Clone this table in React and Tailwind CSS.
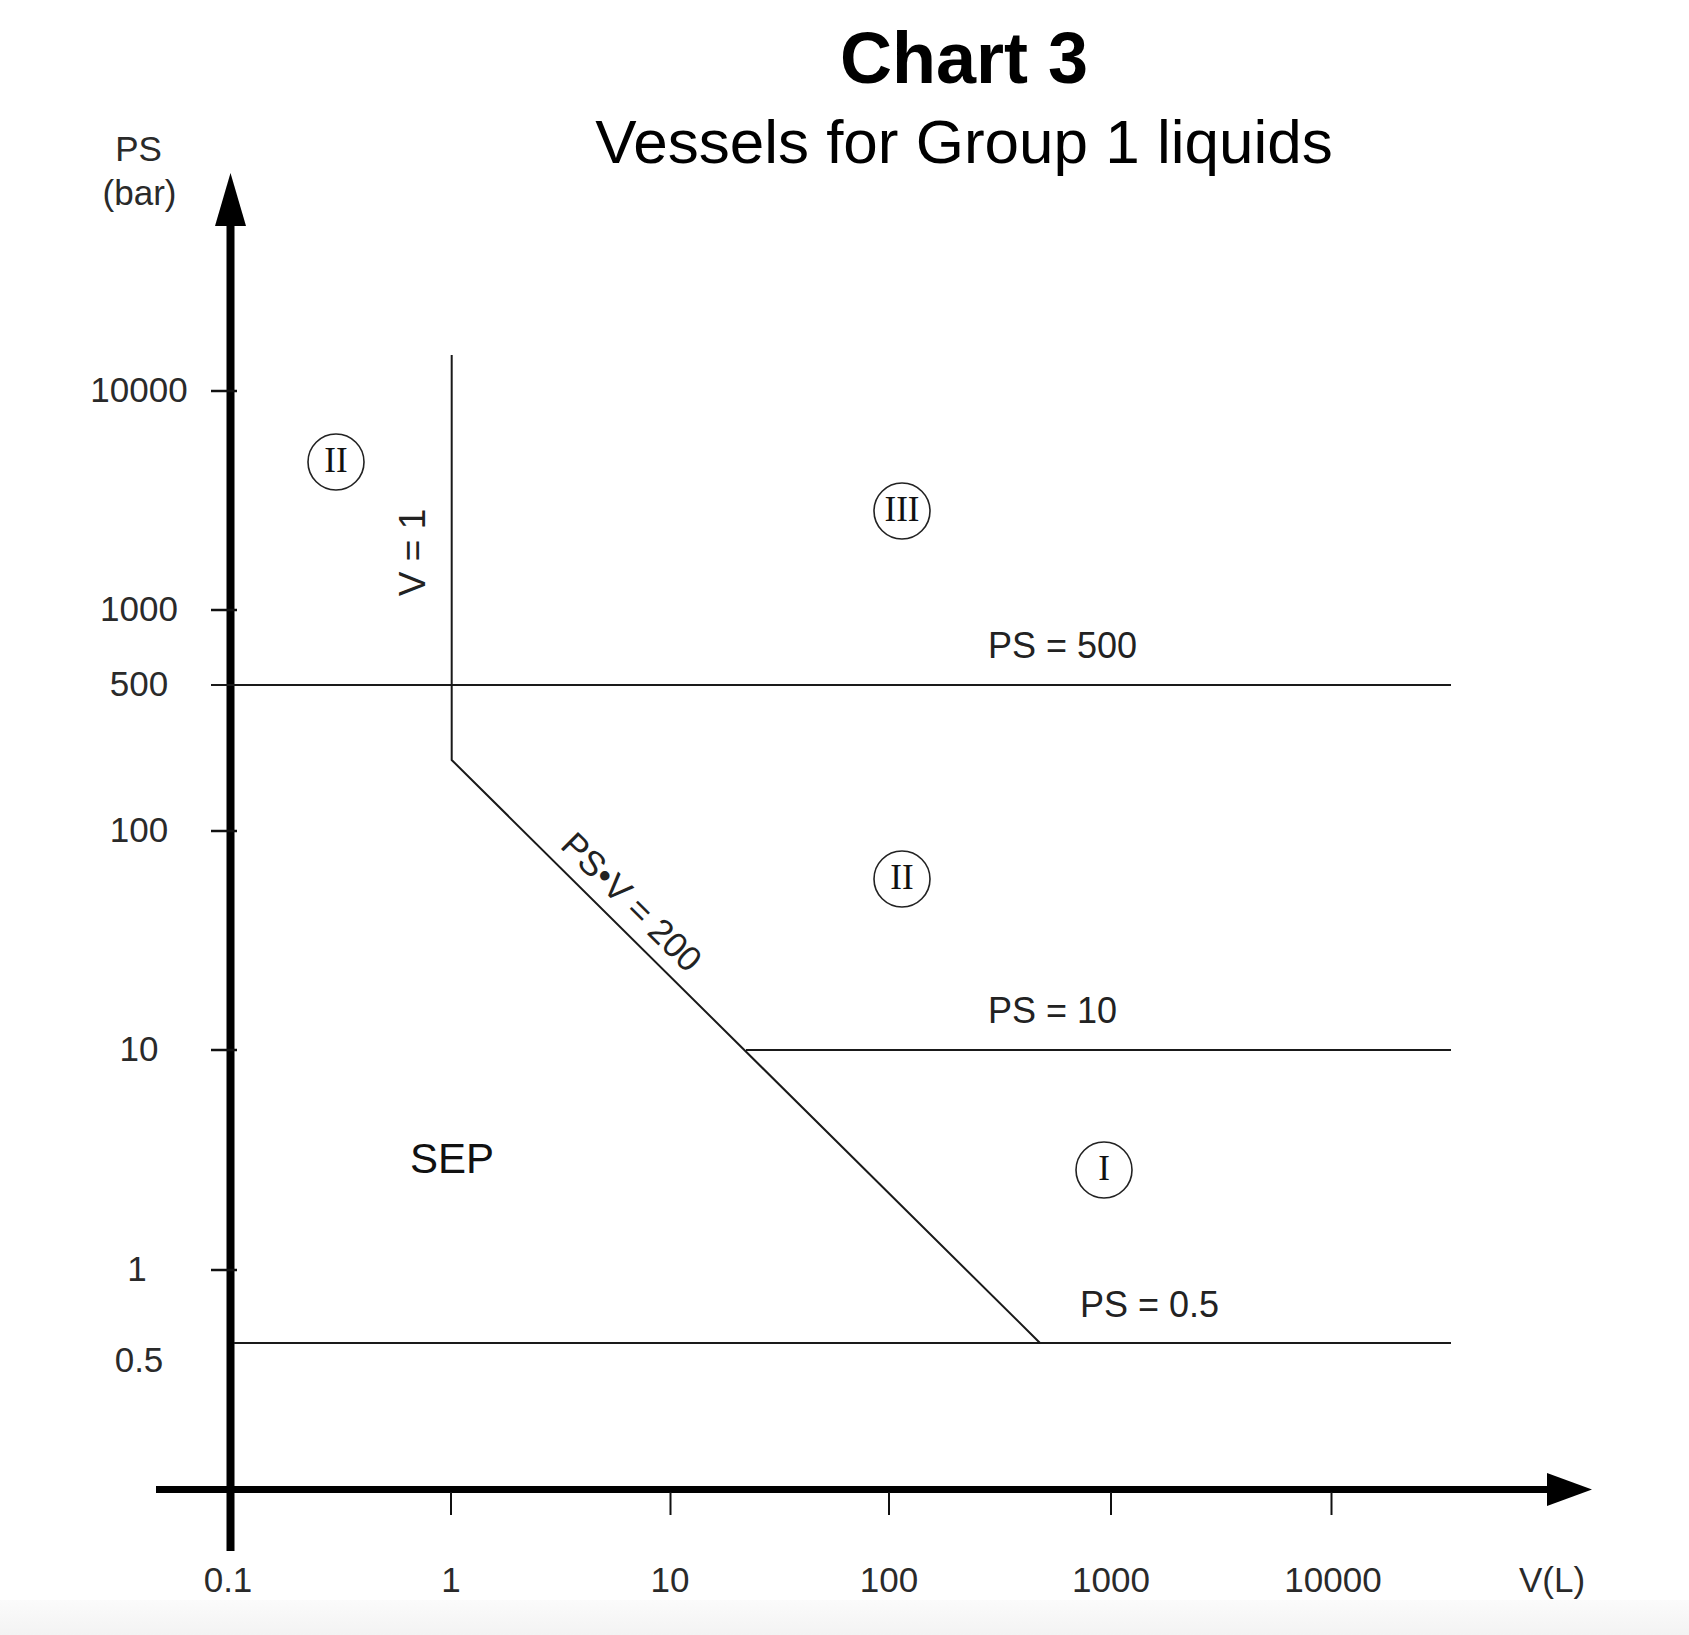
const sans = { fontFamily: '"Liberation Sans", Arial, sans-serif' };
const serif = { fontFamily: '"Liberation Serif", "Times New Roman", serif' };

const yTicks = [391, 610, 831, 1050, 1270];
const yLabels = [
  { t: "10000", y: 391 },
  { t: "1000", y: 610 },
  { t: "500", y: 685 },
  { t: "100", y: 831 },
  { t: "10", y: 1050 },
  { t: "1", y: 1270, x: 137 },
  { t: "0.5", y: 1361 },
];
const xTicks = [451, 670.5, 889, 1111, 1331.5];
const xLabels = [
  { t: "0.1", x: 228 },
  { t: "1", x: 451 },
  { t: "10", x: 670 },
  { t: "100", x: 889 },
  { t: "1000", x: 1111 },
  { t: "10000", x: 1333 },
  { t: "V(L)", x: 1552 },
];
const classes = [
  { t: "II", cx: 336, cy: 462 },
  { t: "III", cx: 902, cy: 511 },
  { t: "II", cx: 902, cy: 879 },
  { t: "I", cx: 1104, cy: 1170 },
];

function Chart() {
  return (
    <svg
      className="col-start-1 row-start-1 block w-[1689px] h-[1600px]"
      viewBox="0 0 1689 1600"
      style={sans}
    >
      {/* axes */}
      <line x1="230.5" y1="215" x2="230.5" y2="1551" stroke="#000" strokeWidth="8" />
      <polygon points="230.5,173 215,226 246,226" fill="#000" />
      <line x1="156" y1="1489.5" x2="1555" y2="1489.5" stroke="#000" strokeWidth="7" />
      <polygon points="1592,1489.5 1547,1473 1547,1506" fill="#000" />

      {yTicks.map(y => (
        <line key={y} x1="211" y1={y} x2="237" y2={y} stroke="#111" strokeWidth="2.5" />
      ))}
      {xTicks.map(x => (
        <line key={x} x1={x} y1="1492" x2={x} y2="1515" stroke="#111" strokeWidth="2" />
      ))}

      <g fontSize="35" fill="#2a2a2a" textAnchor="middle">
        <text x="138.5" y="161">PS</text>
        <text x="139.5" y="205">(bar)</text>
        {yLabels.map(l => (
          <text key={l.t} x={l.x || 139} y={l.y + 11}>{l.t}</text>
        ))}
        {xLabels.map(l => (
          <text key={l.t} x={l.x} y="1592">{l.t}</text>
        ))}
      </g>

      {/* boundaries */}
      <g stroke="#1a1a1a" strokeWidth="2" fill="none">
        <line x1="211" y1="685" x2="1451" y2="685" />
        <line x1="746" y1="1050" x2="1451" y2="1050" />
        <line x1="234" y1="1343" x2="1451" y2="1343" />
        <polyline points="451.7,355 451.7,760 1040,1343" />
      </g>

      <g fontSize="36" fill="#222">
        <text x="988" y="658">PS = 500</text>
        <text x="988" y="1023">PS = 10</text>
        <text x="1080" y="1317">PS = 0.5</text>
        <text transform="translate(425 552.5) rotate(-90)" textAnchor="middle" fontSize="37">V = 1</text>
        <text transform="translate(559 847) rotate(44.7)" fontSize="35">PS•V = 200</text>
      </g>
      <text x="410" y="1173" fontSize="42" fill="#111">SEP</text>

      {classes.map((c, i) => (
        <g key={i}>
          <circle cx={c.cx} cy={c.cy} r="28" fill="none" stroke="#222" strokeWidth="1.6" />
          <text x={c.cx} y={c.cy + 10} textAnchor="middle" fontSize="35" fill="#111" style={serif}>
            {c.t}
          </text>
        </g>
      ))}
    </svg>
  );
}

export default function App() {
  return (
    <div className="grid grid-rows-[1600px_35px] w-[1689px] h-[1635px] bg-white overflow-hidden text-black" style={sans}>
      <Chart />
      <header className="col-start-1 row-start-1 self-start pl-[239px] pt-[22px] text-center">
        <h1 className="text-[72px] font-bold leading-none">Chart 3</h1>
        <p className="mt-[17px] text-[62px] leading-none">Vessels for Group 1 liquids</p>
      </header>
      <div className="bg-gradient-to-b from-[#fbfbfb] to-[#f3f3f3]" />
    </div>
  );
}
